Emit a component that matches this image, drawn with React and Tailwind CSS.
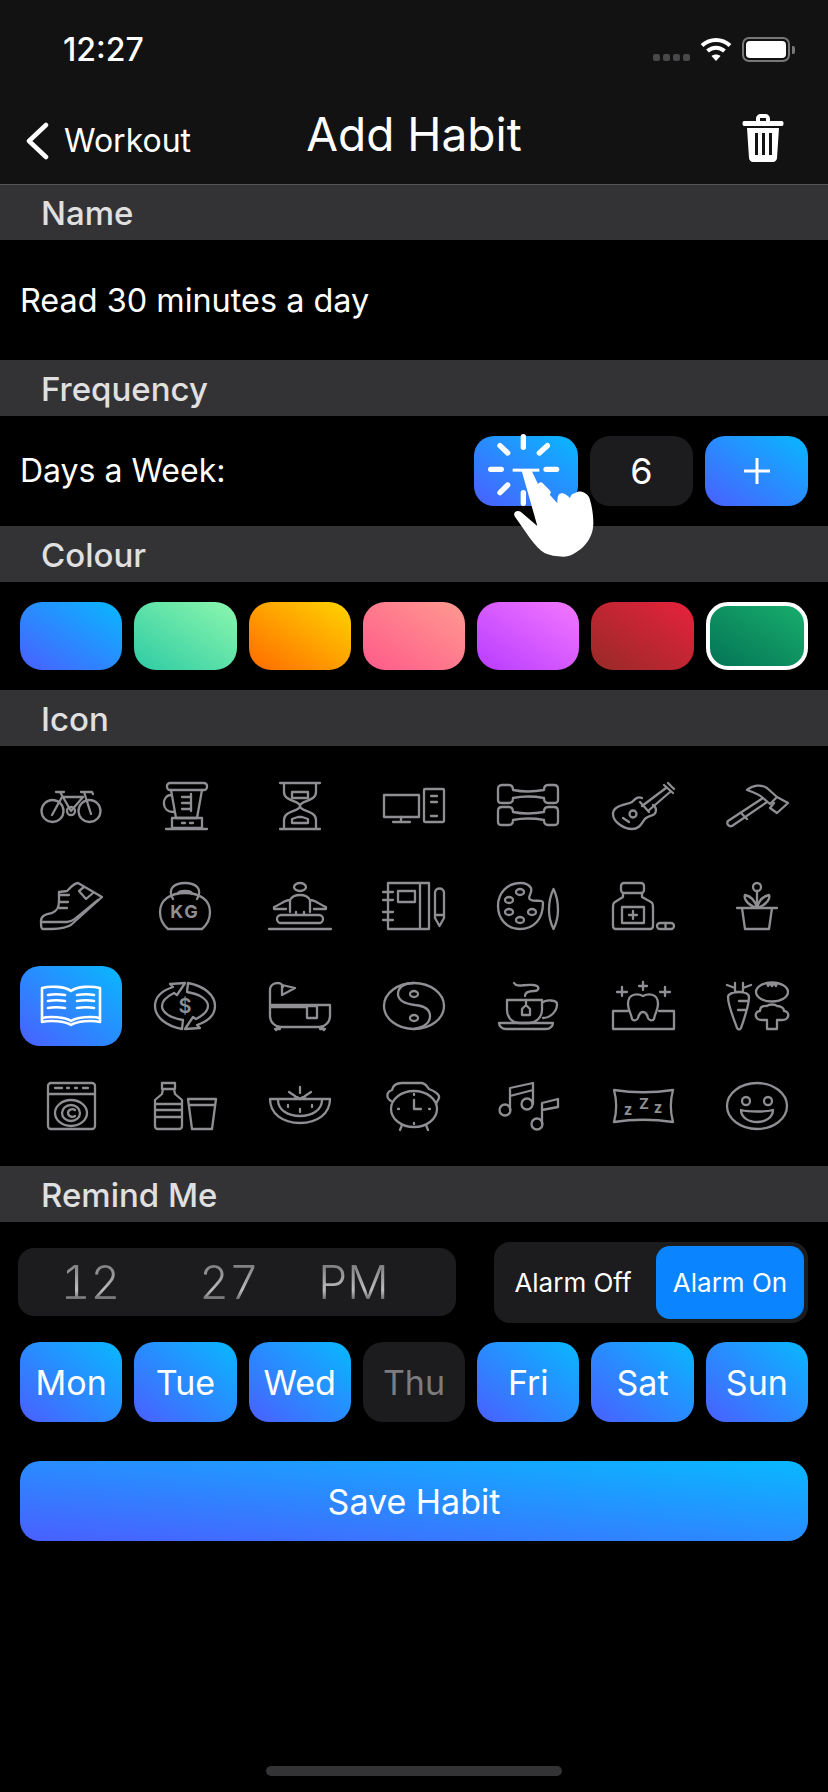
import React from 'react';

const FONT = { fontFamily: 'Inter, sans-serif' };

const Bike = () => (
  <>
    <circle cx="12.5" cy="29" r="11" />
    <circle cx="49.5" cy="29" r="11" />
    <circle cx="31" cy="29" r="4" />
    <path d="M16 10h8M20 10l11 19M12 33l10-18h21L31 29M41 10h11l1 2M44 10l7 22" />
  </>
);
const Blender = () => (
  <>
    <rect x="13" y="1" width="40" height="7" rx="3" />
    <path d="M17 8l5 28h21l5-28M17 13C8 13 6 30 20 30M37 12v17M28 15h9M28 21h9M28 27h9" />
    <path d="M18 36h30v10H18zM12 47h41M28 41h3M36 41h3" />
  </>
);
const Hourglass = () => (
  <>
    <path d="M11 1h40M11 47h40M15 1v9c0 10 16 8 16 14 0 6-16 4-16 14v9M47 1v9c0 10-16 8-16 14 0 6 16 4 16 14v9" />
    <path d="M23 10h16v6H23zM23 41v-4l6-2h4l6 2v4z" />
  </>
);
const Computer = () => (
  <>
    <rect x="1" y="13" width="35" height="22" />
    <path d="M18 35v5M10 40h17" />
    <rect x="41" y="7" width="20" height="33" rx="1" />
    <path d="M48 14h6M48 20h6M48 34h6" />
  </>
);
const Dumbbells = () => (
  <>
    <path d="M5 3h7c3 0 4 2 4 5 10 2 20 2 31 0 0-3 1-5 4-5h6c3 0 4 2 4 4v11c0 2-1 3-4 3h-6c-3 0-4-2-4-5-11-2-21-2-31 0 0 3-1 5-4 5H5c-3 0-4-1-4-3V7c0-2 1-4 4-4z" />
    <path d="M5 25h7c3 0 4 2 4 5 10 2 20 2 31 0 0-3 1-5 4-5h6c3 0 4 2 4 4v11c0 2-1 3-4 3h-6c-3 0-4-2-4-5-11-2-21-2-31 0 0 3-1 5-4 5H5c-3 0-4-1-4-3V29c0-2 1-4 4-4z" />
  </>
);
const Guitar = () => (
  <>
    <path d="M30 16c-4-2-7 1-10 4-5 3-19 3-19 12 0 8 11 15 19 15 9 0 10-8 14-11 4-3 10-2 10-8 0-3-3-5-3-5" />
    <circle cx="21" cy="32" r="3.5" />
    <path d="M11 36l6 4M30 24L54 6M36 29L58 10M52 3l9 8M56 1l6 6M28 20l9 10" />
  </>
);
const Hammer = () => (
  <>
    <path d="M21 8c6-5 14-6 20-2l10 9-7 7-7-6c-4-4-10-6-16-8zM37 16L2 39c-2 3 1 6 4 5l35-24" />
    <path d="M51 15l11 6-11 10-7-5 4-5M15 31l6 6" />
  </>
);
const Shoe = () => (
  <>
    <path d="M1 39c0-6 6-7 11-8 5-2 7-5 7-12v-9l8-1c2-2 7-8 11-8l24 14-30 27c-3 3-12 5-20 5H3c-2 0-2-3-2-8z" />
    <path d="M1 40h26c5 0 8-3 31-22M19 13h10M19 20h9M19 26h8M44 5l-5 4 7 8 7-6" />
  </>
);
const Kettle = () => (
  <>
    <path d="M19 17C13 7 20 1 31 1s18 6 12 16M24 12c0-4 14-4 14 0" />
    <path d="M14 47C8 42 6 36 6 30c0-12 10-19 25-19s25 7 25 19c0 6-2 12-8 17z" />
    <text x="31" y="36" textAnchor="middle" fontSize="18" fontWeight="700" fill="#8e8e93" stroke="none" letterSpacing="2" style={FONT}>KG</text>
  </>
);
const Meditate = () => (
  <>
    <ellipse cx="31" cy="5" rx="6" ry="4" />
    <path d="M21 30V18c-6 0-10 5-16 7v2h12M41 30V18c6 0 10 5 16 7v2H45M21 18c2-4 6-5 10-5s8 1 10 5M27 30v3M35 30v3" />
    <rect x="8" y="33" width="46" height="8" rx="4" />
    <path d="M0 47h62" />
  </>
);
const Notebook = () => (
  <>
    <path d="M5 1h41v46H5zM37 1v46" />
    <rect x="15" y="9" width="17" height="11" />
    <path d="M0 10h10M0 18h10M0 30h10M0 38h10" />
    <path d="M52 11c0-6 9-6 9 0v25l-4.500 8-4.500-8zM52 33h9" />
  </>
);
const Palette = () => (
  <>
    <path d="M24 1C10 1 1 11 1 24s9 23 22 23c14 0 23-10 23-26 0-4-8-1-12-3-5-2 2-7 0-12-2-3-6-5-10-5z" />
    <ellipse cx="23" cy="10" rx="4" ry="3" />
    <ellipse cx="12" cy="18" rx="4" ry="3" />
    <ellipse cx="12" cy="30" rx="4" ry="3" />
    <ellipse cx="23" cy="38" rx="4" ry="3" />
    <ellipse cx="35" cy="30" rx="4" ry="3" />
    <path d="M56.500 7C53 14 52 22 52 28c0 7 2 14 4.500 19C59 42 61 35 61 28c0-6-1-14-4.500-21z" />
  </>
);
const Medicine = () => (
  <>
    <rect x="9" y="1" width="23" height="10" rx="3" />
    <path d="M11 11v4l-8 5c-2 1-2 3-2 5v19c0 2 1 3 3 3h34c2 0 3-1 3-3V25c0-2 0-4-2-5l-9-5v-4" />
    <rect x="10" y="25" width="22" height="16" />
    <path d="M21 29v8M17 33h8" />
    <rect x="45" y="41" width="17" height="6" rx="3" />
    <path d="M53.500 41v6" />
  </>
);
const Plant = () => (
  <>
    <circle cx="31" cy="5" r="4" />
    <path d="M31 9v17M31 26c-2-8-7-12-12-13-1 2 0 9 12 13M31 26c2-8 7-12 12-13 1 2 0 9-12 13" />
    <path d="M11 26h40M16 26l3 21h24l3-21" />
  </>
);
const Cycle = () => (
  <>
    <path d="M19 5C7 9 1 16 1 24c0 11 11 20 27 23l1-9C17 36 8 31 8 24c0-5 4-9 12-13l3 2 8-12-15 1z" />
    <path transform="rotate(180 31 24)" d="M19 5C7 9 1 16 1 24c0 11 11 20 27 23l1-9C17 36 8 31 8 24c0-5 4-9 12-13l3 2 8-12-15 1z" />
    <text x="31" y="31" textAnchor="middle" fontSize="20" fontWeight="600" fill="#8e8e93" stroke="none" style={FONT}>$</text>
  </>
);
const Bath = () => (
  <>
    <path d="M1 23h60v11c0 6-5 11-11 11H12C6 45 1 40 1 34V8c0-5 4-7 8-7 3 0 5 2 5 4" />
    <path d="M13 13V3l13 3zM1 25h36M38 24h10v12H38zM9 45l-2 3M53 45l2 3M6 47h5M51 47h5" />
  </>
);
const YinYang = () => (
  <>
    <ellipse cx="31" cy="24" rx="30" ry="23" />
    <path d="M31 1C20 1 15 6 15 12c0 8 9 10 17 11 10 1 15 5 15 11 0 6-5 11-16 13" />
    <ellipse cx="31" cy="12" rx="4" ry="3" />
    <ellipse cx="31" cy="36" rx="4" ry="3" />
  </>
);
const Tea = () => (
  <>
    <path d="M10 18h35v10c0 8-7 13-13 13H22c-6 0-12-5-12-13zM45 21c4-4 15-3 15 1 0 8-7 14-14 14" />
    <path d="M2 41h54c0 3-3 6-7 6H9c-4 0-7-3-7-6zM17 1c3 5 10 1 19 2 8 1 6 6 1 6-6 0-9 2-9 5M29 18v5M25 33v-6l4-4 4 4v6z" />
  </>
);
const Tooth = () => (
  <>
    <path d="M16 29H1v18h61V29H47" />
    <path d="M31 14c-4-2-15-4-15 8 0 6 3 9 4 15 1 2 5 2 6-1 1-4 2-6 5-6s4 2 5 6c1 3 5 3 6 1 1-6 4-9 4-15 0-12-11-10-15-8z" />
    <path d="M10 5v9M5 10h10M31 0v8M27 4h8M53 5v9M48 10h10" />
  </>
);
const Veg = () => (
  <>
    <path d="M9 1v9h8V1M1 3l8 3M25 3l-8 3M2 15c0-3 5-5 11-5s10 2 10 5c0 9-5 22-8 31-1 2-3 2-4 0C8 37 2 24 2 15zM13 19h9M12 28h8" />
    <ellipse cx="46" cy="10" rx="16" ry="9.500" />
    <path d="M41 1l1 3 2-3 2 3 2-3 2 3 1-3" />
    <path d="M41 38h-5c-8 0-8-9-2-9 0-6 6-5 7-5 2-2 8-2 10 0 2 0 7 1 7 5 6 0 6 9-2 9h-5v9H41z" />
  </>
);
const Washer = () => (
  <>
    <rect x="8" y="1" width="47" height="46" rx="3" />
    <path d="M8 12h47M15 6h7M27 6h2M35 6h2M43 6h5" />
    <ellipse cx="31" cy="31" rx="16" ry="13" />
    <ellipse cx="31" cy="31" rx="9" ry="8" />
    <path d="M35 28c-3-2-7 0-7 3s4 5 7 3" />
  </>
);
const Water = () => (
  <>
    <path d="M8 1h13v6H8zM9 7l-1 5-7 6v26c0 2 1 3 3 3h21c2 0 3-1 3-3V18l-7-6-1-5M1 22h27M1 28h27M1 35h27" />
    <path d="M34 17h28l-4 30H38zM35 23h26" />
  </>
);
const Melon = () => (
  <>
    <path d="M1 17h60c0 15-13 24-30 24S1 32 1 17zM9 18c0 10 10 16 22 16s22-6 22-16" />
    <path d="M31 5v6M20 10l6 4M42 10l-6 4M25 17l3-2 3 2 3-2 3 2M19 23v2M31 27v3M43 23v2" />
  </>
);
const Alarm = () => (
  <>
    <ellipse cx="31" cy="27" rx="23" ry="18" />
    <path d="M8 19C3 16 3 10 9 8c1-5 5-7 10-7h19c5 0 6 4 8 6 6 2 11 6 10 9l-3 6M31 18v9h7M31 12v1M31 41v1M15 27h1M46 27h1M19 43l-2 5M43 43l2 5" />
  </>
);
const Music = () => (
  <>
    <circle cx="8" cy="28" r="5.500" />
    <circle cx="30" cy="22" r="5.500" />
    <path d="M13 28V6l23-5v21M13 14l23-6" />
    <circle cx="40" cy="42" r="5.500" />
    <path d="M45 42V21l16-4v8l-16 3" />
  </>
);
const Pillow = () => (
  <>
    <path d="M2 8c19 3 39 3 59 0-3 11-3 21 0 32-20-3-40-3-59 0 3-11 3-21 0-32z" />
    <text x="16" y="33" textAnchor="middle" fontSize="15" fontWeight="700" fill="#8e8e93" stroke="none" style={FONT}>z</text>
    <text x="32" y="27" textAnchor="middle" fontSize="15" fontWeight="700" fill="#8e8e93" stroke="none" style={FONT}>Z</text>
    <text x="46" y="31" textAnchor="middle" fontSize="15" fontWeight="700" fill="#8e8e93" stroke="none" style={FONT}>z</text>
  </>
);
const Smile = () => (
  <>
    <ellipse cx="31" cy="24" rx="30" ry="23" />
    <circle cx="20" cy="19" r="4" />
    <circle cx="42" cy="19" r="4" />
    <path d="M15 28c8 2 24 2 32 0 0 7-7 12-16 12s-16-5-16-12z" />
  </>
);

const Book = () => (
  <>
    <path d="M31 9C25 4 10 4 2 6v30c8-2 23-1 29 3 6-4 21-5 29-3V6c-8-2-23-2-29 3z" />
    <path d="M2 36v4c8-2 23-1 29 3 6-4 21-5 29-3v-4M8 13c5-1 11-1 17 0M8 19c5-1 11-1 17 0M8 26c5-1 11-1 17 0M37 13c6-1 12-1 17 0M37 19c6-1 12-1 17 0M37 26c6-1 12-1 17 0" />
  </>
);

const ICONS = [
  Bike, Blender, Hourglass, Computer, Dumbbells, Guitar, Hammer,
  Shoe, Kettle, Meditate, Notebook, Palette, Medicine, Plant,
  Book, Cycle, Bath, YinYang, Tea, Tooth, Veg,
  Washer, Water, Melon, Alarm, Music, Pillow, Smile,
];

const SWATCHES = [
  'from-[#4a5fff] to-[#08b8ff]',
  'from-[#2ecba4] to-[#8cf7ad]',
  'from-[#ff6a00] to-[#ffd500]',
  'from-[#ff5a8a] to-[#ff9a90]',
  'from-[#b83cff] to-[#f478ff]',
  'from-[#962a26] to-[#e8223c]',
];

const DAYS = ['Mon', 'Tue', 'Wed', 'Thu', 'Fri', 'Sat', 'Sun'];

const SectionHeader = ({ title, h = 'h-[56px] pt-[4px]' }) => (
  <div className={`${h} bg-[#333336] flex items-center pl-[41px] text-[33px] font-medium text-[#e0e0e0]`}>{title}</div>
);

const BLUE = 'bg-linear-to-tr/srgb from-[#4a5fff] to-[#08b8ff]';
const PICKER_TEXT = 'text-center leading-[68px] tabular-nums bg-linear-to-b/srgb from-[#808082] from-[25%] via-[#bcbcbe] via-[62%] to-[#707072] to-[75%] bg-clip-text text-transparent';

const TouchHand = () => (
  <svg className="absolute left-[440px] top-[410px]" width="388" height="170" viewBox="0 0 1164 510">
    <g stroke="#fff" strokeWidth="16" strokeLinecap="round" fill="none">
      <path d="M250 80v32M152 178h32M318 178h32M180 107l23 22M322 107l-24 22M180 248l23-23M250 248v32M302 225l22 22" />
    </g>
    <rect x="218" y="176" width="80" height="9" fill="#fff" />
    <path
      fill="#fff"
      d="M245 182h30l25 53c12 2 24 10 30 20l22 25c0-18 2-30 13-30 10 0 20 8 25 15 2-10 8-15 15-15 4-4 12-6 20-5 14 4 24 14 25 25 6 20 10 45 10 70 0 30-14 55-30 70-20 18-40 30-60 30-22 0-42-4-55-10-15-8-30-25-45-45l-45-65c-8-12 4-22 17-15l50 43z"
    />
  </svg>
);

export default function App() {
  return (
    <div className="relative w-[828px] h-[1792px] bg-black text-white flex flex-col overflow-hidden" style={FONT}>
      <div className="h-[185px] shrink-0 bg-[#121212] border-b border-[#555558] flex flex-col">
        <div className="h-[100px] flex justify-between pl-[63px] pr-[33px] pt-[30px]">
          <span className="text-[32px] leading-10 font-medium">12:27</span>
          <div className="flex items-start gap-[10px] pt-[7px]">
            <div className="flex gap-[3px] mt-[17px]">
              <span className="w-[7px] h-[7px] rounded-[2px] bg-[#48484a]" />
              <span className="w-[7px] h-[7px] rounded-[2px] bg-[#48484a]" />
              <span className="w-[7px] h-[7px] rounded-[2px] bg-[#48484a]" />
              <span className="w-[7px] h-[7px] rounded-[2px] bg-[#48484a]" />
            </div>
            <svg width="32" height="24" viewBox="0 0 32 24" fill="none" stroke="#fff" strokeWidth="4">
              <path d="M2 8.500c8-7.500 20-7.500 28 0M7.500 14c5-4.500 12-4.500 17 0" />
              <path d="M16 24l-4.500-5c2.500-2 6.500-2 9 0z" fill="#fff" stroke="none" />
            </svg>
            <div className="flex items-center gap-[2px]">
              <div className="w-[48px] h-[25px] rounded-[7px] border-2 border-[#77777a] p-[2px]">
                <div className="w-full h-full rounded-[4px] bg-white" />
              </div>
              <span className="w-[3px] h-[8px] rounded-r-[2px] bg-[#77777a]" />
            </div>
          </div>
        </div>
        <div className="relative flex-1 flex items-start">
          <div className="flex items-center pl-[25px] pt-[21px]">
            <svg width="24" height="38" viewBox="0 0 24 38" fill="none" stroke="#fff" strokeWidth="4.500" strokeLinecap="round" strokeLinejoin="round">
              <path d="M21 3L4 19l17 16" />
            </svg>
            <span className="ml-[15px] text-[32px] leading-10">Workout</span>
          </div>
          <div className="absolute left-0 right-0 top-[6px] text-center text-[46px] leading-[56px]">Add Habit</div>
          <div className="ml-auto pr-[44px] pt-[14px]">
            <svg width="42" height="48" viewBox="0 0 42 48" fill="#fff">
              <path fillRule="evenodd" d="M14 5c0-3 2-5 5-5h4c3 0 5 2 5 5v2h12c2 0 2 5 0 5H2c-2 0-2-5 0-5h12zm4 2h6V4h-6zM5 14h32l-2 30c0 2-2 4-4 4H11c-2 0-4-2-4-4zm8 5v22h3V19zm7 0v22h3V19zm7 0v22h3V19z" />
            </svg>
          </div>
        </div>
      </div>

      <SectionHeader title="Name" h="h-[55px] pt-[2px]" />
      <div className="h-[120px] flex items-center pl-5 pt-[2px] text-[32.4px]">Read 30 minutes a day</div>

      <SectionHeader title="Frequency" />
      <div className="h-[110px] flex items-center justify-between px-5">
        <span className="text-[32px]">Days a Week:</span>
        <div className="flex gap-3">
          <div className={`w-[104px] h-[70px] rounded-[20px] ${BLUE}`} />
          <div className="w-[103px] h-[70px] rounded-[20px] bg-[#1c1c1e] flex items-center justify-center text-[36px]">6</div>
          <div className={`w-[103px] h-[70px] rounded-[20px] ${BLUE} flex items-center justify-center`}>
            <svg width="28" height="28" viewBox="0 0 28 28" stroke="#fff" strokeWidth="3">
              <path d="M14 1v26M1 14h26" />
            </svg>
          </div>
        </div>
      </div>

      <SectionHeader title="Colour" />
      <div className="h-[108px] grid grid-cols-7 gap-3 px-5 items-center">
        {SWATCHES.map((c) => (
          <div key={c} className={`h-[68px] rounded-[22px] bg-linear-to-tr/srgb ${c}`} />
        ))}
        <div className="h-[68px] rounded-[22px] bg-linear-to-tr/srgb from-[#047456] to-[#18ad6c] border-4 border-white" />
      </div>

      <SectionHeader title="Icon" />
      <div className="h-[420px] grid grid-cols-7 gap-x-3 gap-y-5 p-5">
        {ICONS.map((Icon, i) => {
          const active = i === 14;
          return (
            <div key={i} className={`h-20 flex items-center justify-center rounded-[20px] ${active ? BLUE : ''}`}>
              <svg
                width="62"
                height="48"
                viewBox="0 0 62 48"
                fill="none"
                stroke={active ? '#fff' : '#8e8e93'}
                strokeWidth={active ? 2.6 : 2.3}
                strokeLinejoin="round"
                strokeLinecap="round"
                overflow="visible"
              >
                <Icon />
              </svg>
            </div>
          );
        })}
      </div>

      <SectionHeader title="Remind Me" />
      <div className="flex items-start justify-between pl-[18px] pr-5 mt-5">
        <div className="mt-[6px] w-[438px] h-[68px] rounded-[16px] bg-[#1c1c1e] flex items-center text-[46px] font-light">
          <span className={`w-[145px] ${PICKER_TEXT}`}>12</span>
          <span className={`w-[132px] ${PICKER_TEXT}`}>27</span>
          <span className={`w-[117px] ${PICKER_TEXT}`}>PM</span>
        </div>
        <div className="w-[314px] h-[81px] rounded-[16px] bg-[#1c1c1e] flex items-center p-1 text-[26px]">
          <span className="flex-1 text-center pr-2">Alarm Off</span>
          <span className="w-[148px] h-[73px] rounded-[14px] bg-[#0a84ff] flex items-center justify-center">Alarm On</span>
        </div>
      </div>

      <div className="grid grid-cols-7 gap-3 px-5 mt-[19px]">
        {DAYS.map((d) => (
          <div
            key={d}
            className={`h-20 rounded-[20px] flex items-center justify-center text-[34px] ${d === 'Thu' ? 'bg-[#1c1c1e] text-[#7c7c80]' : BLUE}`}
          >
            {d}
          </div>
        ))}
      </div>

      <div className={`mx-5 mt-[39px] h-20 rounded-[20px] ${BLUE} flex items-center justify-center text-[34px]`}>Save Habit</div>

      <div className="mt-auto mb-4 mx-auto w-[296px] h-[10px] rounded-full bg-[#333336]" />

      <TouchHand />
    </div>
  );
}
